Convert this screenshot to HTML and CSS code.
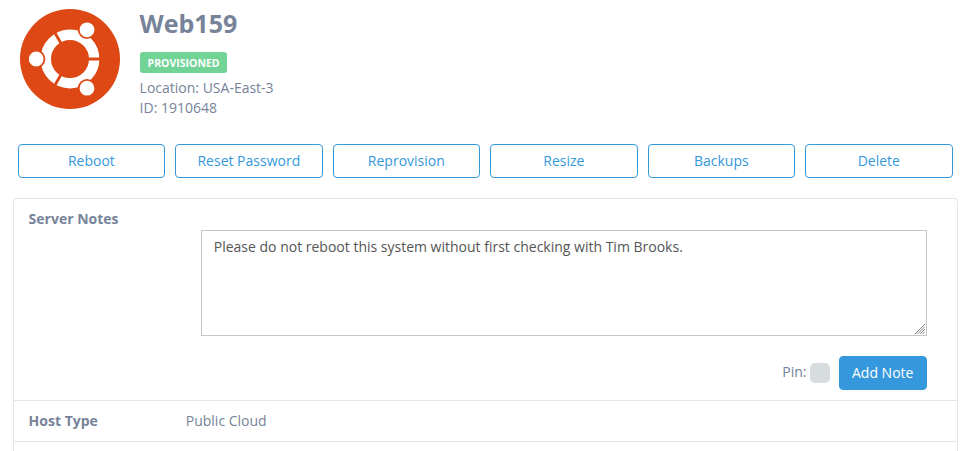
FILE: index.html
```
<!DOCTYPE html>
<html lang="en">

<head>
    <meta charset="UTF-8">
    <meta name="viewport" content="width=device-width, initial-scale=1.0">
    <title>Web159</title>
    <link rel="stylesheet" href="styles.css">
</head>

<body>
    <!-- Server header -->
    <div class="server-header">
        <svg class="server-logo" viewBox="0 0 100 100" width="100" height="100">
            <circle cx="50" cy="50" r="50" fill="#dd4814" />
            <circle cx="50" cy="50" r="24.2" fill="none" stroke="#fff" stroke-width="10.4" />
            <path d="M50 50H82M50 50L34 22.3M50 50L34 77.7" stroke="#dd4814" stroke-width="2.8" />
            <g fill="#fff" stroke="#dd4814" stroke-width="1.8">
                <circle cx="16.2" cy="50" r="8.3" />
                <circle cx="67" cy="20.8" r="8.3" />
                <circle cx="67" cy="79.2" r="8.3" />
            </g>
        </svg>
        <div class="server-info">
            <h3>Web159</h3>
            <span class="label">PROVISIONED</span>
            <div>Location: USA-East-3</div>
            <div>ID: 1910648</div>
        </div>
    </div>

    <!-- Actions -->
    <div class="actions">
        <button class="btn btn-outline">Reboot</button>
        <button class="btn btn-outline">Reset Password</button>
        <button class="btn btn-outline">Reprovision</button>
        <button class="btn btn-outline">Resize</button>
        <button class="btn btn-outline">Backups</button>
        <button class="btn btn-outline">Delete</button>
    </div>

    <!-- Details -->
    <div class="panel">
        <div class="row">
            <div class="row-label">Server Notes</div>
            <div class="row-value">
                <form class="note-form">
                    <div class="note-text">
                        <textarea spellcheck="false">Please do not reboot this system without first checking with Tim Brooks.</textarea>
                        <svg class="grip" viewBox="0 0 10 10" width="10" height="10">
                            <path d="M0 10L10 0M2.5 10L10 2.5M5 10L10 5M7.5 10L10 7.5" />
                        </svg>
                    </div>
                    <div class="note-actions">
                        <label class="pin">Pin: <input type="checkbox"></label>
                        <button type="button" class="btn btn-primary">Add Note</button>
                    </div>
                </form>
            </div>
        </div>
        <div class="row">
            <div class="row-label">Host Type</div>
            <div class="row-value">Public Cloud</div>
        </div>
    </div>
</body>

</html>
```
FILE: styles.css
```
* {
    box-sizing: border-box;
}

body {
    margin: 0;
    padding: 9px 12.4px 0 12.6px;
    background: #fff;
    color: #768399;
    font-family: "Open Sans", sans-serif;
    font-size: 14px;
    line-height: 20px;
}

.server-header {
    display: flex;
    height: 135px;
    padding-left: 7.4px;
}

.server-logo {
    flex: none;
    margin-right: 19.6px;
}

.server-info h3 {
    margin: -1px 0 14px;
    font-size: 25px;
    line-height: 30px;
    font-weight: 700;
}

.label {
    display: block;
    width: 87px;
    height: 21px;
    margin-bottom: 5px;
    padding-left: 8px;
    border-radius: 3px;
    background: #72d397;
    color: #fff;
    font-size: 10.5px;
    font-weight: 700;
    line-height: 22px;
}

.actions {
    display: grid;
    grid-template-columns: repeat(6, 1fr);
    gap: 10px;
    padding: 0 5px;
    margin-bottom: 20px;
}

.btn {
    height: 34px;
    padding: 0 12px;
    border: 1px solid #3598dc;
    border-radius: 4px;
    font: inherit;
    cursor: pointer;
}

.btn-outline {
    background: #fff;
    color: #3598dc;
}

.btn-primary {
    background: #3598dc;
    color: #fff;
}

.panel {
    height: 253px;
    border: 1px solid #e7e7e2;
    border-bottom: none;
    border-radius: 4px 4px 0 0;
}

.row {
    display: grid;
    grid-template-columns: 2fr 10fr;
    border-bottom: 1px solid #e7e7e2;
}

.row-label,
.row-value {
    padding: 10px 15px;
}

.row-label {
    font-weight: 700;
}

.note-form {
    padding: 21px 15px 0;
}

.note-text {
    position: relative;
}

textarea {
    display: block;
    width: 100%;
    height: 106px;
    padding: 6px 12px;
    border: 1px solid #c6c6c6;
    border-radius: 0;
    outline: none;
    background: #fff;
    color: #555;
    font: inherit;
    resize: none;
}

.grip {
    position: absolute;
    right: 2px;
    bottom: 2px;
    stroke: #777;
    stroke-width: 0.9;
}

.note-actions {
    display: flex;
    justify-content: flex-end;
    margin-top: 20px;
}

.pin {
    display: flex;
    gap: 3.3px;
    margin: 6px 9px 0 0;
}

.pin input {
    appearance: none;
    width: 20px;
    height: 20px;
    margin: 1px 0 0;
    border-radius: 5px;
    background: #d7dcde;
}

.note-actions .btn {
    padding: 0 12.2px;
}
```
